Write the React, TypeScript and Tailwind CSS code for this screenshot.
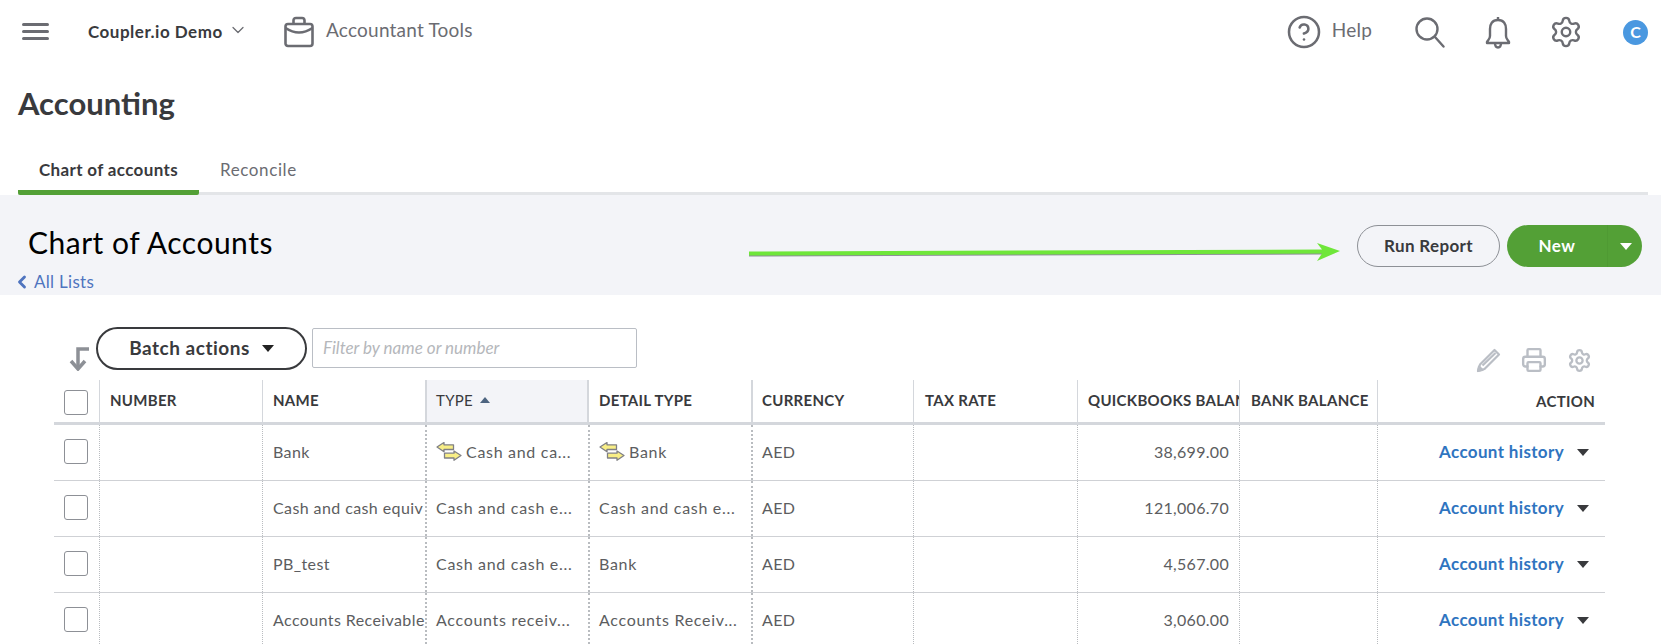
import { Settings, CircleHelp, Printer, ChevronDown, ChevronLeft } from "lucide-react";

const cols = "grid grid-cols-[45px_163px_163px_163px_163px_162px_164px_162px_138px_228px]";

function Exchange() {
  return (
    <svg width="26" height="19" viewBox="0 0 26 19" className="shrink-0">
      <path d="M1 5 L8 0.5 L8 2.8 L17.5 2.8 L17.5 7.5 L8 7.5 L8 9.8 Z" fill="#f8ee86" stroke="#808085" strokeWidth="1.3" strokeLinejoin="round" />
      <path d="M25 13.5 L18 9 L18 11.2 L8.5 11.2 L8.5 16 L18 16 L18 18.3 Z" fill="#f8ee86" stroke="#808085" strokeWidth="1.3" strokeLinejoin="round" />
    </svg>
  );
}

function Caret({ className }: { className: string }) {
  return <span className={"block w-0 h-0 border-x-[6.5px] border-x-transparent border-t-[7px] " + className} />;
}

function Box() {
  return <span className="block w-[24px] h-[25px] border border-[#8d9096] rounded-[3px] bg-white" />;
}

const rows = [
  { name: "Bank", type: "Cash and ca...", detail: "Bank", icon: true, bal: "38,699.00" },
  { name: "Cash and cash equiv", type: "Cash and cash e...", detail: "Cash and cash e...", icon: false, bal: "121,006.70" },
  { name: "PB_test", type: "Cash and cash e...", detail: "Bank", icon: false, bal: "4,567.00" },
  { name: "Accounts Receivable", type: "Accounts receiv...", detail: "Accounts Receiv...", icon: false, bal: "3,060.00" },
];

const dot = "border-l border-dotted border-[#b9bcc0]";
const dotThick = "border-l-2 border-dotted border-[#b9bcc0]";

export default function App() {
  return (
    <div className="relative w-[1661px] h-[644px] overflow-hidden bg-white text-[#393a3d] font-['Lato','Liberation_Sans',sans-serif]">
      {/* top bar */}
      <header className="flex items-center h-[64px] text-[#6b6c72]">
        <div className="ml-[22px] -mt-[2px] w-[27px] flex flex-col gap-[4px]">
          <span className="block h-[3px] bg-[#6b6c72] rounded-sm" />
          <span className="block h-[3px] bg-[#6b6c72] rounded-sm" />
          <span className="block h-[3px] bg-[#6b6c72] rounded-sm" />
        </div>
        <span className="ml-[39px] w-[139px] whitespace-nowrap text-[17px] font-bold text-[#393a3d] tracking-[0.5px]">Coupler.io Demo</span>
        <ChevronDown size={20} strokeWidth={1.5} className="ml-[1px] -mt-[5px]" />
        <svg width="30" height="32" viewBox="0 0 30 32" fill="none" stroke="#6b6c72" strokeWidth="2.6" strokeLinejoin="round" className="ml-[36px] -mt-[1px]">
          <path d="M9.5 8 V4.5 Q9.5 2 12 2 H18 Q20.5 2 20.5 4.5 V8" />
          <rect x="1.5" y="8" width="27" height="22" rx="2.5" />
          <path d="M1.5 12 Q15 21 28.5 12" />
        </svg>
        <span className="ml-[12px] -mt-[3px] text-[19px] tracking-[0.22px]">Accountant Tools</span>
        <CircleHelp size={36} strokeWidth={1.7} className="ml-auto" />
        <span className="ml-[10px] -mt-[3px] text-[19px] tracking-[0.2px]">Help</span>
        <svg width="30" height="31" viewBox="0 0 30 31" fill="none" stroke="#6b6c72" strokeWidth="2.4" strokeLinecap="round" className="ml-[43px]">
          <circle cx="12" cy="12" r="10.5" />
          <path d="M20 20 L28.5 29.5" />
        </svg>
        <svg width="26" height="33" viewBox="0 0 26 33" fill="none" stroke="#6b6c72" strokeWidth="2.4" strokeLinejoin="round" className="ml-[40px]">
          <path d="M13 1 V4" />
          <path d="M13 4 C7 4 5 8.5 5 13 V20 C5 23 3 24 2 26 V27 H24 V26 C23 24 21 23 21 20 V13 C21 8.5 19 4 13 4 Z" />
          <path d="M10 27 Q10 31.5 13 31.5 Q16 31.5 16 27" />
        </svg>
        <Settings size={34} strokeWidth={1.7} className="ml-[38px]" />
        <span className="ml-[40px] mr-[13px] w-[25px] h-[25px] rounded-full bg-[#4a98e0] text-white text-[16px] font-bold flex items-center justify-center">C</span>
      </header>

      {/* page title */}
      <h1 className="ml-[18px] mt-[18px] text-[31px] leading-[42px] font-bold text-[#393a3d]">Accounting</h1>

      {/* tabs */}
      <nav className="ml-[18px] mr-[13px] mt-[26px] h-[45px] flex border-b-[3px] border-[#e3e5e8]">
        <div className="w-[181px] h-[45px] flex justify-center pt-[7px] border-b-[5px] border-[#53a036] rounded-b-[2px] text-[17px] font-bold tracking-[0.35px] whitespace-nowrap">Chart of accounts</div>
        <div className="ml-[21px] pt-[7px] text-[17px] text-[#6b6c72] tracking-[0.6px]">Reconcile</div>
      </nav>

      {/* band */}
      <section className="relative h-[100px] bg-[#f3f4f8] flex justify-between">
        <div className="pl-[18px]">
          <h2 className="ml-[10px] mt-[27px] text-[30px] leading-[40px] text-black tracking-[0.5px]">Chart of Accounts</h2>
          <a className="mt-[9px] -ml-[1px] flex items-center text-[17px] leading-[22px] text-[#4f74bf] tracking-[0.3px]">
            <ChevronLeft size={20} strokeWidth={3.4} className="-ml-[5px] mr-[2px]" />All Lists
          </a>
        </div>
        <div className="flex mt-[30px] mr-[19px] h-[42px] gap-[7px]">
          <button className="w-[143px] h-[42px] rounded-full border border-[#8d9096] text-[17px] font-bold tracking-[0.35px] text-[#393a3d]">Run Report</button>
          <div className="flex w-[135px] h-[42px] rounded-full bg-[#53a036] text-white text-[17px] font-bold">
            <span className="w-[100px] flex items-center justify-center tracking-[0.5px]">New</span>
            <span className="flex-1 flex items-center justify-center border-l border-[#4f9a33] pl-[2px]"><Caret className="border-t-white" /></span>
          </div>
        </div>
        <svg width="600" height="24" viewBox="0 0 600 24" className="absolute left-[748px] top-[46px]">
          <path d="M1 14 L574 11.5 L574 13.5 L1 15.5 Z" fill="#8d9096" />
          <path d="M1 10.5 L574 8.5 L569 2 L592 10 L569 20 L574 12.5 L1 14.5 Z" fill="#6fe63a" />
        </svg>
      </section>

      {/* toolbar */}
      <div className="ml-[54px] w-[1551px] pt-[32px] h-[85px] flex items-start">
        <svg width="22" height="24" viewBox="0 0 22 24" fill="none" stroke="#8d9096" strokeWidth="3.5" className="ml-[14px] mt-[20px]">
          <path d="M21 2 H10 V21" />
          <path d="M3 14 L10 22 L17 14" />
        </svg>
        <button className="ml-[6px] w-[211px] h-[43px] rounded-full border-2 border-[#393a3d] flex items-center justify-center gap-[12px] text-[19px] font-bold tracking-[0.5px]">
          Batch actions <Caret className="border-t-[#222]" />
        </button>
        <div className="ml-[5px] mt-[1px] w-[325px] h-[40px] border border-[#babec5] rounded-[2px] flex items-center pl-[10px] text-[17px] italic text-[#b5b7bb]">Filter by name or number</div>
        <div className="ml-auto mr-[13px] mt-[20px] flex items-center gap-[20px] text-[#babec5]">
          <svg width="25" height="25" viewBox="0 0 25 25" fill="none" stroke="#babec5" strokeWidth="2.2" strokeLinejoin="round">
            <path d="M18.5 2 L23 6.5 L8.5 21 L2 23 L4 16.5 Z" />
            <path d="M6.5 17.5 L19.5 5" />
            <path d="M2 23 L3 18.5 L6.5 22 Z" fill="#babec5" />
          </svg>
          <Printer size={26} strokeWidth={2.2} />
          <Settings size={25} strokeWidth={2.2} />
        </div>
      </div>

      {/* table */}
      <div className="ml-[54px] w-[1551px] text-[16px] text-[#5c5d60]">
        <div className={cols + " h-[45px] border-b-[3px] border-[#d4d7dc] font-bold text-[15px] text-[#393a3d] tracking-[0.3px]"}>
          <div className="pl-[10px] pt-[10px]"><Box /></div>
          <div className="pl-[10px] pt-[9px] border-l border-[#d4d7dc]">NUMBER</div>
          <div className="pl-[10px] pt-[9px] border-l border-[#d4d7dc]">NAME</div>
          <div className="pl-[9px] pt-[9px] bg-[#f3f4f8] border-x-2 border-[#d4d7dc] font-normal flex gap-[7px] -mr-px"><span>TYPE</span><span className="mt-[8px] block w-0 h-0 border-x-[5px] border-x-transparent border-b-[6px] border-b-[#4d6480]" /></div>
          <div className="pl-[11px] pt-[9px]">DETAIL TYPE</div>
          <div className="pl-[9px] pt-[9px] border-l-2 border-[#d4d7dc]">CURRENCY</div>
          <div className="pl-[11px] pt-[9px] border-l border-[#d4d7dc]">TAX RATE</div>
          <div className="pl-[10px] pt-[9px] border-l border-[#d4d7dc] overflow-hidden whitespace-nowrap">QUICKBOOKS BALAN</div>
          <div className="pl-[11px] pt-[9px] border-l border-[#d4d7dc] whitespace-nowrap">BANK BALANCE</div>
          <div className="pr-[10px] pt-[10px] border-l border-[#d4d7dc] text-right">ACTION</div>
        </div>
        {rows.map((r) => (
          <div key={r.name} className={cols + " h-[56px] border-b border-[#cfd1d5]"}>
            <div className="pl-[10px] pt-[14px]"><Box /></div>
            <div className={dot} />
            <div className={dot + " pl-[10px] pb-[2px] flex items-center overflow-hidden whitespace-nowrap tracking-[0.4px]"}>{r.name}</div>
            <div className={dotThick + " pl-[9px] pb-[2px] flex items-center gap-[4px] whitespace-nowrap tracking-[0.7px]"}>{r.icon && <Exchange />}{r.type}</div>
            <div className={dotThick + " pl-[9px] pb-[2px] flex items-center gap-[4px] whitespace-nowrap tracking-[0.7px]"}>{r.icon && <Exchange />}{r.detail}</div>
            <div className={dotThick + " pl-[9px] pb-[2px] flex items-center tracking-[0.3px]"}>AED</div>
            <div className={dot} />
            <div className={dot + " pr-[10px] pb-[2px] flex items-center justify-end tracking-[0.3px]"}>{r.bal}</div>
            <div className={dot} />
            <div className={dot + " pr-[16px] flex items-center justify-end gap-[13px]"}>
              <a className="text-[17px] font-bold text-[#2f74c0] tracking-[0.35px] -mt-[2px]">Account history</a>
              <Caret className="border-t-[#393a3d]" />
            </div>
          </div>
        ))}
      </div>
    </div>
  );
}
